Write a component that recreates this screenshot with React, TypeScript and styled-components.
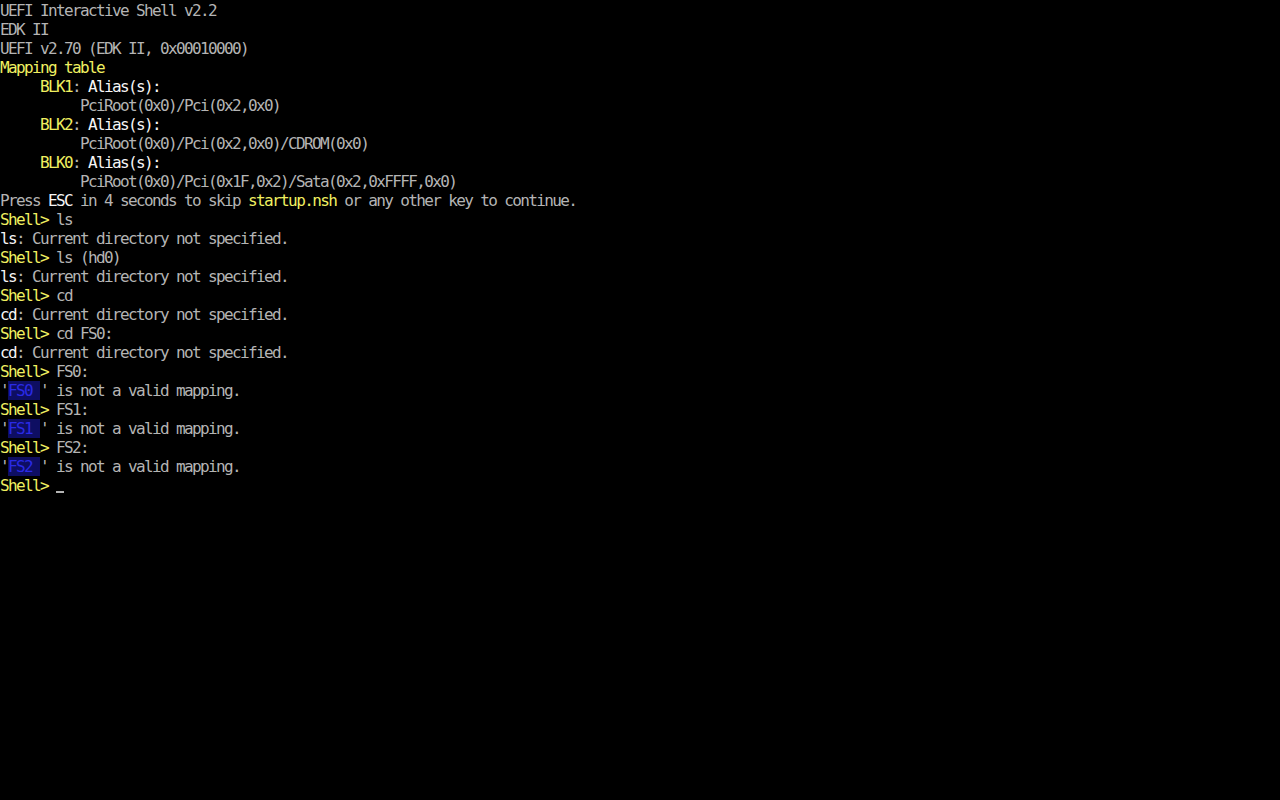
import React from 'react';
import styled, { createGlobalStyle } from 'styled-components';

const GlobalStyle = createGlobalStyle`
  html, body {
    margin: 0;
    padding: 0;
    background: #000;
  }
`;

type Tone = 'gray' | 'white' | 'yellow' | 'blue';

// a segment of a line: [text, tone]
type Seg = [string, Tone];

const prompt = (cmd: string): Seg[] => [['Shell> ', 'yellow'], [cmd, 'gray']];
const notSpecified = (name: string): Seg[] => [
  [name, 'white'],
  [': Current directory not specified.', 'gray'],
];
const badMapping = (name: string): Seg[] => [
  ["'", 'gray'],
  [name, 'blue'],
  ["' is not a valid mapping.", 'gray'],
];
const alias = (blk: string): Seg[] => [
  ['     ', 'gray'],
  [blk, 'yellow'],
  [': ', 'gray'],
  ['Alias(s):', 'white'],
];
const path = (p: string): Seg[] => [['          ' + p, 'gray']];

const lines: Seg[][] = [
  [['UEFI Interactive Shell v2.2', 'gray']],
  [['EDK II', 'gray']],
  [['UEFI v2.70 (EDK II, 0x00010000)', 'gray']],
  [['Mapping table', 'yellow']],
  alias('BLK1'),
  path('PciRoot(0x0)/Pci(0x2,0x0)'),
  alias('BLK2'),
  path('PciRoot(0x0)/Pci(0x2,0x0)/CDROM(0x0)'),
  alias('BLK0'),
  path('PciRoot(0x0)/Pci(0x1F,0x2)/Sata(0x2,0xFFFF,0x0)'),
  [
    ['Press ', 'gray'],
    ['ESC', 'white'],
    [' in 4 seconds to skip ', 'gray'],
    ['startup.nsh', 'yellow'],
    [' or any other key to continue.', 'gray'],
  ],
  prompt('ls'),
  notSpecified('ls'),
  prompt('ls (hd0)'),
  notSpecified('ls'),
  prompt('cd'),
  notSpecified('cd'),
  prompt('cd FS0:'),
  notSpecified('cd'),
  prompt('FS0:'),
  badMapping('FS0 '),
  prompt('FS1:'),
  badMapping('FS1 '),
  prompt('FS2:'),
  badMapping('FS2 '),
];

export default function App() {
  return (
    <>
      <GlobalStyle />
      <Screen>
        {lines.map((segs, i) => (
          <Line key={i}>
            {segs.map(([text, tone], j) => (
              <Seg key={j} $tone={tone}>
                {text}
              </Seg>
            ))}
          </Line>
        ))}
        <Line>
          <Seg $tone="yellow">Shell&gt; </Seg>
          <Cursor />
        </Line>
      </Screen>
    </>
  );
}

// Styles ---------------------------------------------------------

const toneColor: Record<Tone, string> = {
  gray: '#b4b4b4',
  white: '#f6f6f6',
  yellow: '#f0f060',
  blue: '#2a2ae6',
};

const Screen = styled.div`
  width: 100vw;
  height: 100vh;
  background: #000;
  overflow: hidden;
  font-family: 'DejaVu Sans Mono', 'Liberation Mono', monospace;
  font-size: 16px;
  letter-spacing: -1.63px;
  color: #b4b4b4;
`;

const Line = styled.div`
  height: 19px;
  line-height: 19px;
  white-space: pre;
  display: flex;
  align-items: center;
  padding-top: 1px;
  box-sizing: border-box;
`;

const Seg = styled.span<{ $tone: Tone }>`
  color: ${(p) => toneColor[p.$tone]};
  background: ${(p) => (p.$tone === 'blue' ? '#0e0e62' : 'transparent')};
`;

const Cursor = styled.span`
  display: inline-block;
  width: 8px;
  height: 18px;
  box-sizing: border-box;
  border-bottom: 2px solid #b4b4b4;
  transform: translateY(-1px);
`;
